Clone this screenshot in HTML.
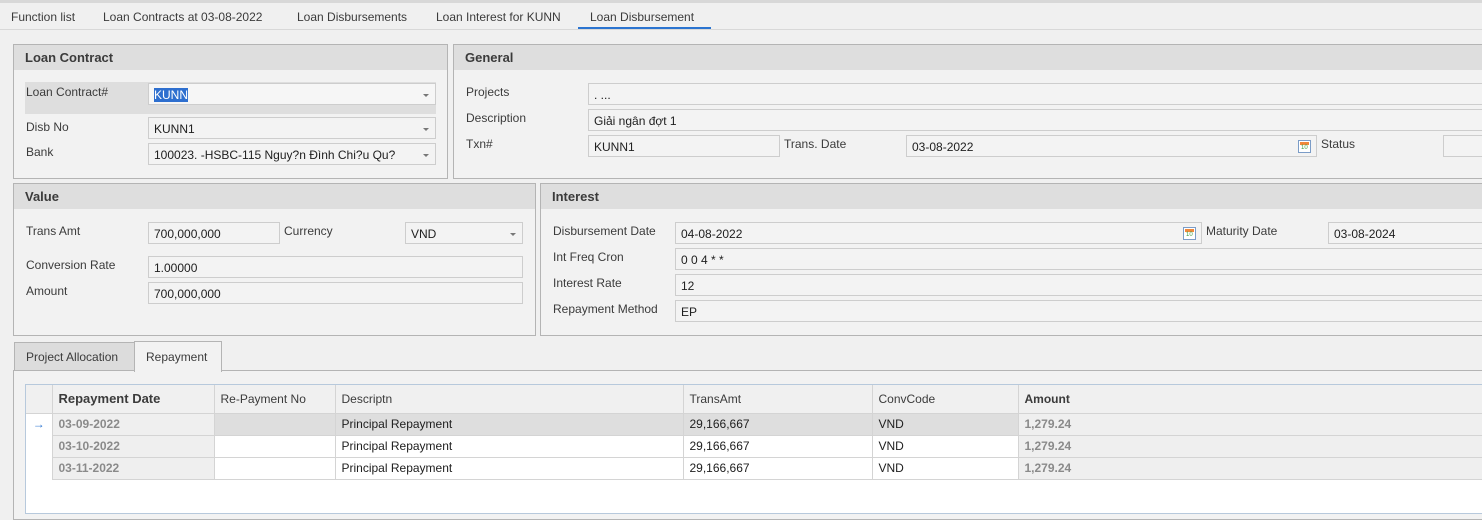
<!DOCTYPE html>
<html><head><meta charset="utf-8"><style>
*{box-sizing:border-box;margin:0;padding:0}
body{width:1482px;height:509px;overflow:hidden;background:#f0f0f0;font-family:"Liberation Sans","DejaVu Sans",sans-serif;font-size:12px;color:#3b3b3b;position:relative}
.a{position:absolute;white-space:nowrap}
.box{position:absolute;border:1px solid #b4b4b4;background:#f2f2f2}
.hd{position:absolute;left:0;right:0;top:0;height:25px;background:#dedede;font-weight:bold;font-size:13px;padding:5px 0 0 11px;color:#3b3b3b}
.in{position:absolute;border:1px solid #cdcdcd;background:#f3f3f3;height:22px;padding:4px 0 0 5px;white-space:nowrap;overflow:hidden;color:#202020}
.dd::after{content:"";position:absolute;right:6px;top:10px;border-left:3px solid transparent;border-right:3px solid transparent;border-top:3px solid #777}
.cal{position:absolute;right:5px;top:4px;width:13px;height:13px;border:1px solid #7b9cc7;background:#fff}
.cal::before{content:"";position:absolute;left:1px;right:1px;top:1px;height:3px;background:#f0883a}
.cal::after{content:"10";position:absolute;left:2px;top:4px;font-size:6px;color:#3a9a3a}
.lb{position:absolute;white-space:nowrap;color:#3b3b3b}
.tab{position:absolute;top:10px}
table{border-collapse:collapse;table-layout:fixed}
td{border:1px solid #d4d4d4;height:22px;padding:0 6px;white-space:nowrap;color:#202020;overflow:hidden}
tr.h td{height:28px;color:#3b3b3b;border-top:none}
</style></head><body>
<div class="a" style="left:0;top:0;width:1482px;height:3px;background:#d8d8d8"></div>
<div class="a" style="left:0;top:29px;width:1482px;height:1px;background:#d8d8d8"></div>
<div class="tab a" style="left:11px">Function list</div>
<div class="tab a" style="left:103px">Loan Contracts at 03-08-2022</div>
<div class="tab a" style="left:297px">Loan Disbursements</div>
<div class="tab a" style="left:436px">Loan Interest for KUNN</div>
<div class="tab a" style="left:590px">Loan Disbursement</div>
<div class="a" style="left:578px;top:27px;width:133px;height:2px;background:#2b74d0"></div>

<div class="box" style="left:13px;top:44px;width:435px;height:135px"><div class="hd">Loan Contract</div></div>
<div class="a" style="left:25px;top:82px;width:411px;height:32px;background:#dedede"></div>
<div class="lb" style="left:26px;top:85px">Loan Contract#</div>
<div class="in dd" style="left:148px;top:83px;width:288px;background:#f6f6f6"><span style="background:#2e6fcf;color:#fff">KUNN</span></div>
<div class="lb" style="left:26px;top:120px">Disb No</div>
<div class="in dd" style="left:148px;top:117px;width:288px">KUNN1</div>
<div class="lb" style="left:26px;top:145px">Bank</div>
<div class="in dd" style="left:148px;top:143px;width:288px">100023. -HSBC-115 Nguy?n Đình Chi?u Qu?</div>

<div class="box" style="left:453px;top:44px;width:1040px;height:135px"><div class="hd">General</div></div>
<div class="lb" style="left:466px;top:85px">Projects</div>
<div class="in" style="left:588px;top:83px;width:900px">. ...</div>
<div class="lb" style="left:466px;top:111px">Description</div>
<div class="in" style="left:588px;top:109px;width:900px">Giải ngân đợt 1</div>
<div class="lb" style="left:466px;top:137px">Txn#</div>
<div class="in" style="left:588px;top:135px;width:192px">KUNN1</div>
<div class="lb" style="left:784px;top:137px">Trans. Date</div>
<div class="in" style="left:906px;top:135px;width:411px">03-08-2022<span class="cal"></span></div>
<div class="lb" style="left:1321px;top:137px">Status</div>
<div class="in" style="left:1443px;top:135px;width:60px"></div>

<div class="box" style="left:13px;top:183px;width:523px;height:153px"><div class="hd">Value</div></div>
<div class="lb" style="left:26px;top:224px">Trans Amt</div>
<div class="in" style="left:148px;top:222px;width:132px">700,000,000</div>
<div class="lb" style="left:284px;top:224px">Currency</div>
<div class="in dd" style="left:405px;top:222px;width:118px">VND</div>
<div class="lb" style="left:26px;top:258px">Conversion Rate</div>
<div class="in" style="left:148px;top:256px;width:375px">1.00000</div>
<div class="lb" style="left:26px;top:284px">Amount</div>
<div class="in" style="left:148px;top:282px;width:375px">700,000,000</div>

<div class="box" style="left:540px;top:183px;width:960px;height:153px"><div class="hd">Interest</div></div>
<div class="lb" style="left:553px;top:224px">Disbursement Date</div>
<div class="in" style="left:675px;top:222px;width:527px">04-08-2022<span class="cal"></span></div>
<div class="lb" style="left:1206px;top:224px">Maturity Date</div>
<div class="in" style="left:1328px;top:222px;width:170px">03-08-2024</div>
<div class="lb" style="left:553px;top:250px">Int Freq Cron</div>
<div class="in" style="left:675px;top:248px;width:820px">0 0 4 * *</div>
<div class="lb" style="left:553px;top:276px">Interest Rate</div>
<div class="in" style="left:675px;top:274px;width:820px">12</div>
<div class="lb" style="left:553px;top:302px">Repayment Method</div>
<div class="in" style="left:675px;top:300px;width:820px">EP</div>

<div class="box" style="left:13px;top:370px;width:1480px;height:150px"></div>
<div class="a" style="left:14px;top:342px;width:121px;height:29px;background:#dcdcdc;border:1px solid #b4b4b4;padding:7px 0 0 11px">Project Allocation</div>
<div class="a" style="left:134px;top:341px;width:88px;height:31px;background:#f2f2f2;border:1px solid #b4b4b4;border-bottom:none;padding:8px 0 0 11px">Repayment</div>
<div class="a" style="left:25px;top:384px;width:1470px;height:130px;background:#fff;border:1px solid #b7c9dc"></div>
<table class="a" style="left:26px;top:385px;width:1470px">
<colgroup><col style="width:26px"><col style="width:162px"><col style="width:121px"><col style="width:348px"><col style="width:189px"><col style="width:146px"><col style="width:478px"></colgroup>
<tr class="h" style="background:#f0f0f0"><td style="border-left:none"></td><td style="font-weight:bold;font-size:13px">Repayment Date</td><td>Re-Payment No</td><td>Descriptn</td><td>TransAmt</td><td>ConvCode</td><td style="font-weight:bold">Amount</td></tr>
<tr><td style="background:#fff;border:none;color:#2b74d0;text-align:center;padding:0">→</td><td style="background:#efefef;font-weight:bold;color:#8a8a8a">03-09-2022</td><td style="background:#dedede"></td><td style="background:#dedede">Principal Repayment</td><td style="background:#dedede">29,166,667</td><td style="background:#dedede">VND</td><td style="background:#efefef;font-weight:bold;color:#8a8a8a">1,279.24</td></tr>
<tr><td style="border:none"></td><td style="background:#efefef;font-weight:bold;color:#8a8a8a">03-10-2022</td><td></td><td>Principal Repayment</td><td>29,166,667</td><td>VND</td><td style="background:#efefef;font-weight:bold;color:#8a8a8a">1,279.24</td></tr>
<tr><td style="border:none"></td><td style="background:#efefef;font-weight:bold;color:#8a8a8a">03-11-2022</td><td></td><td>Principal Repayment</td><td>29,166,667</td><td>VND</td><td style="background:#efefef;font-weight:bold;color:#8a8a8a">1,279.24</td></tr>
</table>
</body></html>
